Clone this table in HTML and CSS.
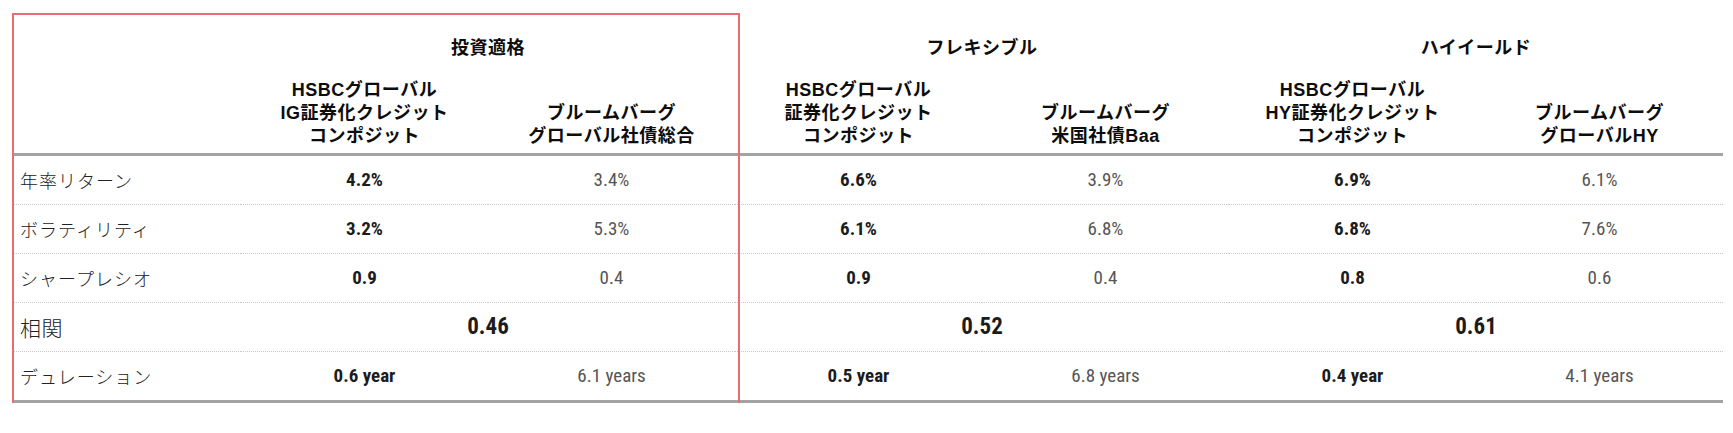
FILE: index.html
```html
<!DOCTYPE html>
<html lang="ja">
<head>
<meta charset="utf-8">
<title>比較表</title>
<link rel="stylesheet" href="styles.css">
</head>
<body>
<div class="wrap">
  <table class="cmp">
    <colgroup>
      <col class="c-label">
      <col class="c-val"><col class="c-val"><col class="c-val">
      <col class="c-val"><col class="c-val"><col class="c-val">
    </colgroup>
    <thead>
      <tr class="groups">
        <th></th>
        <th colspan="2">投資適格</th>
        <th colspan="2">フレキシブル</th>
        <th colspan="2">ハイイールド</th>
      </tr>
      <tr class="names">
        <th></th>
        <th>HSBCグローバル<br>IG証券化クレジット<br>コンポジット</th>
        <th>ブルームバーグ<br>グローバル社債総合</th>
        <th>HSBCグローバル<br>証券化クレジット<br>コンポジット</th>
        <th>ブルームバーグ<br>米国社債Baa</th>
        <th>HSBCグローバル<br>HY証券化クレジット<br>コンポジット</th>
        <th>ブルームバーグ<br>グローバルHY</th>
      </tr>
    </thead>
    <tbody>
      <tr>
        <td class="label">年率リターン</td>
        <td class="num strong">4.2%</td><td class="num">3.4%</td>
        <td class="num strong">6.6%</td><td class="num">3.9%</td>
        <td class="num strong">6.9%</td><td class="num">6.1%</td>
      </tr>
      <tr>
        <td class="label">ボラティリティ</td>
        <td class="num strong">3.2%</td><td class="num">5.3%</td>
        <td class="num strong">6.1%</td><td class="num">6.8%</td>
        <td class="num strong">6.8%</td><td class="num">7.6%</td>
      </tr>
      <tr>
        <td class="label">シャープレシオ</td>
        <td class="num strong">0.9</td><td class="num">0.4</td>
        <td class="num strong">0.9</td><td class="num">0.4</td>
        <td class="num strong">0.8</td><td class="num">0.6</td>
      </tr>
      <tr class="corr">
        <td class="label big">相関</td>
        <td class="num strong big" colspan="2">0.46</td>
        <td class="num strong big" colspan="2">0.52</td>
        <td class="num strong big" colspan="2">0.61</td>
      </tr>
      <tr class="last">
        <td class="label">デュレーション</td>
        <td class="num strong">0.6 year</td><td class="num">6.1 years</td>
        <td class="num strong">0.5 year</td><td class="num">6.8 years</td>
        <td class="num strong">0.4 year</td><td class="num">4.1 years</td>
      </tr>
    </tbody>
  </table>
  <div class="highlight"></div>
</div>
</body>
</html>
```

FILE: styles.css
```css
html, body {
  margin: 0;
  padding: 0;
  background: #ffffff;
}

.wrap {
  position: relative;
  padding: 14px 0 0 13px;
  width: 1710px;
}

.cmp {
  width: 1710px;
  border-collapse: collapse;
  table-layout: fixed;
  font-family: "Liberation Sans", "Noto Sans CJK JP", sans-serif;
  color: #111;
}

.c-label { width: 228px; }
.c-val { width: 247px; }

.cmp th {
  font-weight: bold;
  font-size: 18px;
  letter-spacing: 0.5px;
  text-align: center;
  padding: 0;
  color: #0d0d0d;
}

.groups th {
  height: 62px;
  vertical-align: middle;
  padding-top: 1px;
  box-sizing: border-box;
}

.names th {
  height: 78px;
  line-height: 23px;
  vertical-align: bottom;
  padding-bottom: 5px;
  box-sizing: border-box;
  border-bottom: 3px solid #a3a3a3;
}

.cmp td {
  height: 48px;
  padding: 0;
  border-bottom: 1px dotted #c8c8c8;
  vertical-align: middle;
}

.cmp tr.last td {
  border-bottom: 3px solid #a3a3a3;
}

.label {
  padding-left: 7px !important;
  font-family: "Noto Sans CJK JP", sans-serif;
  font-weight: 300;
  font-size: 18px;
  letter-spacing: 1px;
  color: #222;
}

.label.big {
  font-size: 21px;
  letter-spacing: 0.5px;
}

.num {
  text-align: center;
  font-family: "Roboto Condensed", "Liberation Sans Narrow", "Roboto", "Liberation Sans", sans-serif;
  font-size: 19px;
  color: #555;
}

.num.strong {
  font-weight: bold;
  color: #1c1c1c;
}

.num.big {
  font-size: 23px;
}

.highlight {
  position: absolute;
  left: 12px;
  top: 13px;
  width: 728px;
  height: 401px;
  border: 2px solid #ea6d76;
  box-sizing: border-box;
  pointer-events: none;
}
```
